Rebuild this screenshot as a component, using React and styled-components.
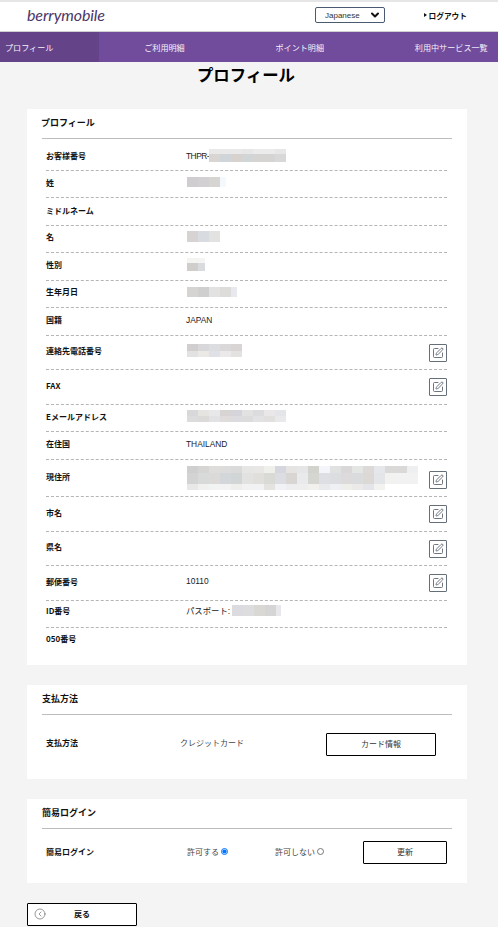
import React from "react";
import styled, { createGlobalStyle } from "styled-components";
import { ChevronDown, SquarePen, CircleChevronLeft } from "lucide-react";

const FONT = `"Liberation Sans", "Noto Sans CJK JP", sans-serif`;
const LABEL_FONT = `"Noto Sans CJK JP", sans-serif`;

const Global = createGlobalStyle`
  html, body { margin: 0; padding: 0; background: #f4f4f4; }
  body { font-family: ${FONT}; color: #333; overflow: hidden; }
  * { box-sizing: border-box; }
`;

const Page = styled.div`
  width: 498px;
  height: 927px;
  overflow: hidden;
`;

const Header = styled.header`
  height: 32px;
  background: #fff;
  border-top: 2px solid #e6e6e6;
  border-bottom: 1px solid #cfcfcf;
  display: flex;
  align-items: center;
  padding: 0 31px 0 27px;
`;

const Logo = styled.div`
  font-family: "Lato", sans-serif;
  font-style: italic;
  font-size: 16px;
  letter-spacing: -0.1px;
  color: #4a3569;
  width: 288px;
  margin-top: -4px;
`;

const SelectBox = styled.div`
  position: relative;
  width: 70px;
  height: 16px;
  margin-top: -3px;
`;

const LangSelect = styled.select`
  appearance: none;
  display: block;
  width: 100%;
  height: 100%;
  border: 1px solid #4a5a70;
  border-radius: 2px;
  background: #fff;
  color: #333;
  font-family: ${FONT};
  font-size: 8px;
  padding: 0 0 0 9px;
`;

const SelectArrow = styled(ChevronDown)`
  position: absolute;
  right: 4px;
  top: 2px;
  color: #111;
  pointer-events: none;
`;

const Logout = styled.a`
  margin-left: auto;
  margin-top: -3px;
  display: flex;
  align-items: center;
  gap: 2px;
  font-size: 7.7px;
  font-weight: 700;
  color: #111;
  &::before {
    content: "";
    border-left: 3px solid #111;
    border-top: 2px solid transparent;
    border-bottom: 2px solid transparent;
  }
`;

const Nav = styled.nav`
  height: 30px;
  background: #714b9c;
  display: flex;
  overflow: hidden;
`;

const NavItem = styled.a`
  flex: none;
  display: flex;
  align-items: center;
  padding: 0 45.4px;
  font-size: 8.1px;
  white-space: nowrap;
  color: #f7f3fb;
  background: ${(p) => (p.$active ? "#654389" : "transparent")};
  &:first-child { padding-left: 5px; }
`;

const Title = styled.h1`
  margin: 0;
  height: 47px;
  padding: 1px 6px 0 0;
  font-size: 16.4px;
  line-height: 24px;
  font-weight: 700;
  color: #000;
  text-align: center;
`;

const Card = styled.section`
  width: 440px;
  margin: 0 0 20px 27px;
  padding: 0 15px;
  background: #fff;
  height: ${(p) => p.$h}px;
`;

const CardHead = styled.h2`
  margin: 0;
  height: 30px;
  padding-bottom: 3px;
  display: flex;
  align-items: center;
  border-bottom: 1px solid #bdbdbd;
  font-size: 9px;
  font-weight: 700;
  color: #111;
  text-indent: ${(p) => p.$indent || 0}px;
`;

const List = styled.div`
  margin: 0 5px 0 4px;
`;

const Row = styled.div`
  height: ${(p) => p.$h}px;
  display: grid;
  grid-template-columns: 140px 1fr auto;
  align-items: center;
  border-bottom: ${(p) => (p.$last ? "none" : "1px dashed #b5b5b5")};
  padding-top: ${(p) => p.$top || 0}px;
  padding-bottom: ${(p) => p.$bottom ?? 4}px;
`;

const Label = styled.div`
  font-family: ${LABEL_FONT};
  font-size: 8px;
  font-weight: 700;
  color: #111;
`;

const Value = styled.div`
  display: flex;
  align-items: center;
  font-size: 8.4px;
  color: #222;
  margin-top: ${(p) => p.$drop || 0}px;
  letter-spacing: ${(p) => (p.$tight ? "-0.5px" : "normal")};
`;

const EditButton = styled.button`
  width: 18px;
  height: 18px;
  padding: 0;
  margin-top: ${(p) => p.$drop ?? 4}px;
  display: flex;
  align-items: center;
  justify-content: center;
  background: #fff;
  border: 1px solid #666e7a;
  border-radius: 1px;
  color: #5f6672;
`;

const Blur = styled.span`
  display: inline-flex;
  flex-direction: column;
  margin-left: ${(p) => p.$ml ?? 1}px;
`;

const BlurRow = styled.span`
  display: flex;
  height: ${(p) => p.$h}px;
`;

const BlurCell = styled.i`
  display: block;
  width: ${(p) => p.$w}px;
  height: 100%;
  background: ${(p) => p.$c};
`;

// rows: [height, colours]; lastW trims the final column
const Redacted = ({ rows, ml, lastW = 11 }) => (
  <Blur $ml={ml}>
    {rows.map(([h, cells], i) => (
      <BlurRow key={i} $h={h}>
        {cells.map((c, j) => (
          <BlurCell key={j} $c={c} $w={j === cells.length - 1 ? lastW : 11} />
        ))}
      </BlurRow>
    ))}
  </Blur>
);

const PayRow = styled.div`
  height: 58px;
  margin: 0 0 0 4px;
  display: flex;
  align-items: center;
`;

const PayLabel = styled(Label)`
  width: 134px;
  margin-bottom: 4px;
`;

const PayValue = styled.div`
  width: 146px;
  font-size: 8px;
  color: #444;
  margin-bottom: 4px;
`;

const OutlineButton = styled.button`
  width: ${(p) => p.$w}px;
  height: 23px;
  padding: 0 0 2px;
  background: #fff;
  border: 1px solid #000;
  border-radius: 1px;
  font-family: ${FONT};
  font-size: 8px;
  color: #333;
`;

const LoginRow = styled(PayRow)`
  height: 46px;
`;

const LoginLabel = styled(Label)`
  width: 141px;
  margin-bottom: 2px;
`;

const Choice = styled.label`
  width: ${(p) => p.$w}px;
  display: flex;
  align-items: center;
  gap: 2px;
  font-size: 8px;
  color: #444;
  margin-bottom: 2px;
`;

const Radio = styled.input`
  width: 7px;
  height: 7px;
  margin: 0;
`;

const BackButton = styled(OutlineButton)`
  position: relative;
  display: block;
  margin-left: 27px;
  font-weight: 700;
  color: #111;
  padding-bottom: 3px;
`;

const BackIcon = styled(CircleChevronLeft)`
  position: absolute;
  left: 6px;
  top: 4px;
  color: #555;
`;

const rows = {
  customer: [
    [5, ["#e9e9e9", "#e9e9e9", "#e9e9e9", "#e7e7e7", "#ebebeb", "#ebebeb", "#e7e7e7"]],
    [8, ["#d9d5d2", "#cfd5d8", "#d8d2cf", "#d1d5d6", "#d6d4d2", "#d6d4d3", "#d8d8d8"]],
  ],
  sei: [[10, ["#cfcdd0", "#d2d0d2", "#d7d5d2", "#f3f9fd"]]],
  mei: [[11, ["#d7d3d2", "#d8dce0", "#e2e2e0"]]],
  gender: [
    [5, ["#f4f4f2", "#f4f4f2"]],
    [8, ["#d0cecb", "#d8dcde"]],
  ],
  birth: [[10, ["#d6d4d3", "#cfcfcf", "#e2e2e2", "#dedcda", "#e8e9ee"]]],
  tel: [
    [7, ["#d2cecf", "#d8d8da", "#dcdde0", "#dad8d8", "#d8d5d4"]],
    [6, ["#e2e2e2", "#ebe9e6", "#e0e1e6", "#ebe9e9", "#e4e2e1"]],
  ],
  mail: [
    [6, ["#d8d8da", "#e6e4e1", "#e8e8eb", "#d8d4d4", "#d4d4da", "#e2e2e2", "#dcdcde", "#e9e7e7", "#e4e5e9"]],
    [6, ["#dcdcde", "#dcdad8", "#e2e2e4", "#e0dcdb", "#dcdce0", "#dcdcdc", "#e2e2e4", "#e2e0df", "#e9e9ec"]],
  ],
  address: [
    [7, ["#cfcfcf", "#d6d5d3", "#dedddc", "#dcdcdc", "#dadada", "#e6e6e4", "#e8e7e5", "#efefec", "#d5d6de", "#e6e4e2", "#e4e6e7", "#d3d3cd", "#f4f4fb", "#e0e2e2", "#d9d7d7", "#e4e6e4", "#dcd9d8", "#e6e7ea", "#dad9d7", "#dad9d7", "#edeff1"]],
    [11, ["#d4d3d3", "#d7dad9", "#dcdad8", "#d4d7da", "#d2d5d5", "#e2e3e1", "#e0dfdc", "#d9d9d6", "#dcdde2", "#d9d5d3", "#e8eaec", "#d5d5d1", "#dedfe4", "#dcdde0", "#dcdadb", "#d9dbdc", "#dbd8d6", "#e3e5e9", "#f2f2f0", "#f2f2f2", "#f2f2f2"]],
    [6, ["#e8e8e8", "#f0f0ee", "#f2f3f3", "#f3f3f3", "#eeeeec", "#f2f2f2", "#f1f2f4", "#e4e3e0", "#f1f2f6", "#eeeef0", "#eeeeee", "#f2f1ee", "#e8eaec", "#eff0f3", "#eeeeeb", "#ebeae8", "#e4e5ea", "#f2f2f0"]],
  ],
  id: [[11, ["#dcdce0", "#dddde0", "#d9d8d5", "#d5d5d5", "#e8e8ec"]]],
};

const Edit = ({ drop }) => (
  <EditButton aria-label="編集" $drop={drop}>
    <SquarePen size={12} strokeWidth={1.8} />
  </EditButton>
);

const App = () => (
  <Page>
    <Global />
    <Header>
      <Logo>berrymobile</Logo>
      <SelectBox>
        <LangSelect defaultValue="ja">
          <option value="ja">Japanese</option>
        </LangSelect>
        <SelectArrow size={12} strokeWidth={4} />
      </SelectBox>
      <Logout>ログアウト</Logout>
    </Header>
    <Nav>
      <NavItem $active>プロフィール</NavItem>
      <NavItem>ご利用明細</NavItem>
      <NavItem>ポイント明細</NavItem>
      <NavItem>利用中サービス一覧</NavItem>
    </Nav>
    <Title>プロフィール</Title>

    <Card $h={556}>
      <CardHead $indent={-1}>プロフィール</CardHead>
      <List>
        <Row $h={32} $top={4} $bottom={2}>
          <Label>お客様番号</Label>
          <Value $tight>THPR-<Redacted rows={rows.customer} ml={0} /></Value>
        </Row>
        <Row $h={27}>
          <Label>姓</Label>
          <Value><Redacted rows={rows.sei} lastW={6} /></Value>
        </Row>
        <Row $h={28} $bottom={3}>
          <Label>ミドルネーム</Label>
        </Row>
        <Row $h={27} $bottom={5}>
          <Label>名</Label>
          <Value><Redacted rows={rows.mei} /></Value>
        </Row>
        <Row $h={28}>
          <Label>性別</Label>
          <Value><Redacted rows={rows.gender} lastW={7} /></Value>
        </Row>
        <Row $h={27} $bottom={5}>
          <Label>生年月日</Label>
          <Value><Redacted rows={rows.birth} lastW={6} /></Value>
        </Row>
        <Row $h={28}>
          <Label>国籍</Label>
          <Value>JAPAN</Value>
        </Row>
        <Row $h={34}>
          <Label>連絡先電話番号</Label>
          <Value><Redacted rows={rows.tel} /></Value>
          <Edit />
        </Row>
        <Row $h={35} $bottom={3}>
          <Label>FAX</Label>
          <Value />
          <Edit drop={3} />
        </Row>
        <Row $h={27}>
          <Label>Eメールアドレス</Label>
          <Value><Redacted rows={rows.mail} /></Value>
        </Row>
        <Row $h={28}>
          <Label>在住国</Label>
          <Value>THAILAND</Value>
        </Row>
        <Row $h={37}>
          <Label>現住所</Label>
          <Value $drop={4}><Redacted rows={rows.address} /></Value>
          <Edit drop={7} />
        </Row>
        <Row $h={35} $bottom={3}>
          <Label>市名</Label>
          <Value />
          <Edit drop={3} />
        </Row>
        <Row $h={34}>
          <Label>県名</Label>
          <Value />
          <Edit />
        </Row>
        <Row $h={35}>
          <Label>郵便番号</Label>
          <Value>10110</Value>
          <Edit />
        </Row>
        <Row $h={27} $bottom={8}>
          <Label>ID番号</Label>
          <Value>パスポート:<Redacted rows={rows.id} ml={2} lastW={5} /></Value>
        </Row>
        <Row $h={24} $last>
          <Label>050番号</Label>
        </Row>
      </List>
    </Card>

    <Card $h={94}>
      <CardHead>支払方法</CardHead>
      <PayRow>
        <PayLabel>支払方法</PayLabel>
        <PayValue>クレジットカード</PayValue>
        <OutlineButton $w={110}>カード情報</OutlineButton>
      </PayRow>
    </Card>

    <Card $h={84}>
      <CardHead>簡易ログイン</CardHead>
      <LoginRow>
        <LoginLabel>簡易ログイン</LoginLabel>
        <Choice $w={88}>
          許可する<Radio type="radio" name="easy" defaultChecked />
        </Choice>
        <Choice $w={88}>
          許可しない<Radio type="radio" name="easy" />
        </Choice>
        <OutlineButton $w={84}>更新</OutlineButton>
      </LoginRow>
    </Card>

    <BackButton $w={110}>
      <BackIcon size={12} strokeWidth={1.2} />
      戻る
    </BackButton>
  </Page>
);

export default App;
